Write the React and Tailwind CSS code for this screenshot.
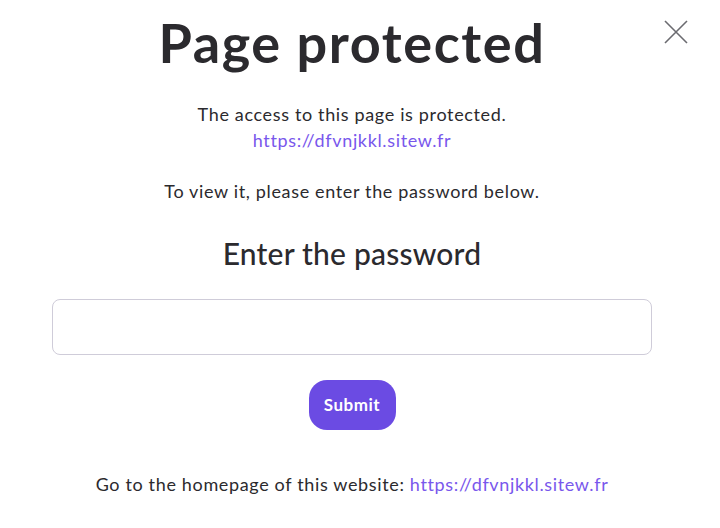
import React, { useState } from 'react';

const ProtectedPage = () => {
    const [password, setPassword] = useState('');
    const url = 'https://dfvnjkkl.sitew.fr';

    return (
        <div className="relative w-[720px] h-[528px] bg-white text-[#2b2a2e]" style={{ fontFamily: 'Lato, "Noto Sans", sans-serif' }}>
            <button className="absolute right-[30px] top-[18px] w-[28px] h-[28px] flex items-center justify-center text-[#6b6b70]">
                <svg width="26" height="26" viewBox="0 0 26 26" fill="none" stroke="currentColor" strokeWidth="1.6">
                    <path d="M2 2 L24 24 M24 2 L2 24" />
                </svg>
            </button>

            <div className="w-[704px] flex flex-col items-center pt-[11px]">
                <h1 className="text-[54px] leading-[64px] font-bold tracking-[1.6px]">Page protected</h1>

                <p className="mt-[26px] text-[18px] leading-[26px] text-center tracking-[0.65px]">
                    The access to this page is protected.
                    <br />
                    <a href="#" className="text-[#7957ec]">{url}</a>
                </p>
                <p className="mt-[25px] text-[18px] leading-[26px] tracking-[0.65px]">To view it, please enter the password below.</p>

                <h2 className="mt-[32px] text-[30px] leading-[34px] font-medium tracking-[0.2px]">Enter the password</h2>

                <input
                    type="password"
                    value={password}
                    onChange={(e) => setPassword(e.target.value)}
                    className="mt-[29px] w-[600px] h-[56px] rounded-[8px] border border-[#cfccd9] px-4 outline-none"
                />

                <button className="mt-[25px] w-[87px] h-[50px] rounded-[18px] bg-[#6b4be3] text-white text-[17px] font-bold tracking-[0.5px]">
                    Submit
                </button>

                <p className="mt-[41px] text-[18px] leading-[26px] tracking-[0.65px]">
                    Go to the homepage of this website: <a href="#" className="text-[#7957ec]">{url}</a>
                </p>
            </div>
        </div>
    );
};

export default ProtectedPage;
